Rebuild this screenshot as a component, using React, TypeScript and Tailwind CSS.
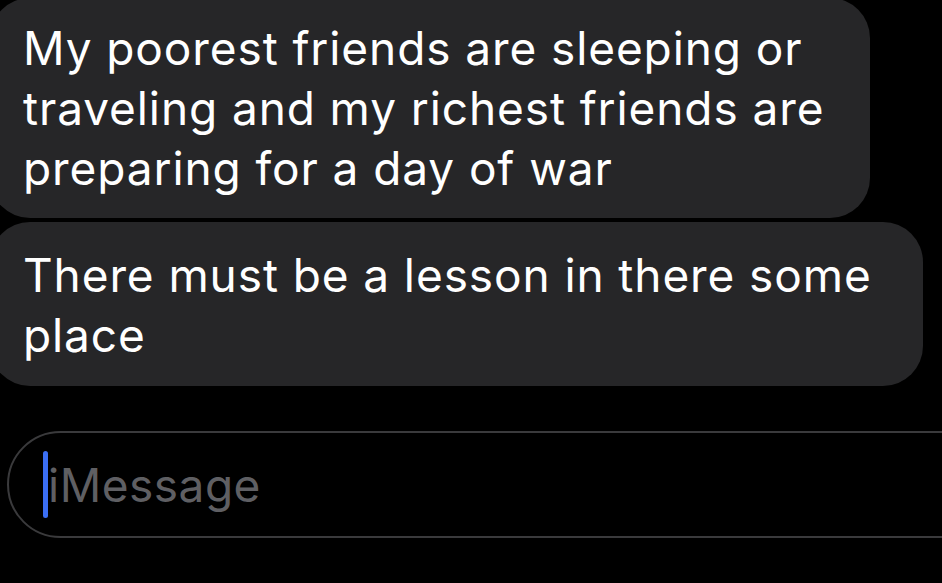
export default function App() {
  return (
    <div className="w-[942px] h-[583px] bg-black overflow-hidden font-['Inter','Noto_Sans',sans-serif] text-white">
      <div className="flex flex-col -mt-[2px]">
        {/* first bubble */}
        <div className="w-[880px] -ml-[10px] rounded-[40px] bg-[#262628] pl-[33px] pt-[20px] pb-[20px]">
          <p className="text-[46px] leading-[60px] tracking-[0.9px]">
            My poorest friends are sleeping or
            <br />
            traveling and my richest friends are
            <br />
            preparing for a day of war
          </p>
        </div>

        {/* second bubble */}
        <div className="w-[933px] -ml-[10px] mt-[4px] rounded-[40px] bg-[#262628] pl-[33px] pt-[23px] pb-[21px]">
          <p className="text-[46px] leading-[60px] tracking-[0.9px]">
            There must be a lesson in there some
            <br />
            place
          </p>
        </div>

        {/* input */}
        <div className="mt-[45px] ml-[7px] w-[1000px] h-[107px] rounded-[54px] border-2 border-[#3a3a3c] flex items-center pl-[34px]">
          <span className="w-[5px] h-[67px] rounded-full bg-[#3b6ff5]" />
          <span className="text-[46px] leading-none text-[#5f5f63] tracking-[0.5px]">iMessage</span>
        </div>
      </div>
    </div>
  );
}
